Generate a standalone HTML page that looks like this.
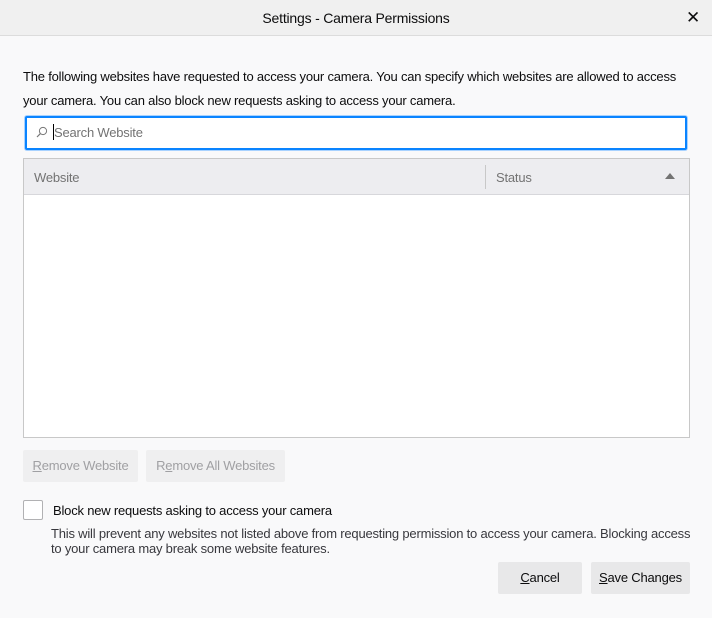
<!DOCTYPE html>
<html><head><style>
*{box-sizing:border-box;margin:0;padding:0}
body{width:712px;height:618px;background:#f9f9fa;font-family:"Liberation Sans",sans-serif;font-size:13px;color:#0c0c0d;position:relative;overflow:hidden;letter-spacing:-0.2px}
.abs{position:absolute}
.title{left:0;top:0;width:712px;height:36px;background:#f0f0f0;border-bottom:1px solid #dcdcdc;text-align:center;line-height:36px;font-size:14px}
.btn{background:#e8e8e9;border-radius:2px;text-align:center;line-height:32px;font-size:13px}
.dis{background:#efeff0;color:#a0a0a3}
</style></head><body>
<div class="abs title">Settings - Camera Permissions</div>
<div class="abs" style="right:12px;top:8px;font-size:17px">✕</div>
<div class="abs" style="left:23px;top:65px;width:660px;line-height:24px">The following websites have requested to access your camera. You can specify which websites are allowed to access your camera. You can also block new requests asking to access your camera.</div>
<div class="abs" style="left:25px;top:116px;width:662px;height:34px;border:2px solid #0a84ff;border-radius:2px;background:#fff;box-shadow:0 0 0 1px #a8d2ff"></div>
<svg class="abs" style="left:36px;top:126px" width="12" height="12" viewBox="0 0 12 12"><circle cx="7" cy="5" r="3.6" fill="none" stroke="#777" stroke-width="1"/><path d="M4.4 7.6 1 11" stroke="#777" stroke-width="1.2"/></svg>
<div class="abs" style="left:53px;top:124px;width:1px;height:16px;background:#000"></div>
<div class="abs" style="left:54px;top:125px;color:#737373">Search Website</div>
<div class="abs" style="left:23px;top:158px;width:667px;height:280px;border:1px solid #c8c8c8;background:#fff"></div>
<div class="abs" style="left:24px;top:159px;width:665px;height:36px;background:#ededf0;border-bottom:1px solid #d7d7db"></div>
<div class="abs" style="left:485px;top:165px;width:1px;height:24px;background:#c8c8c8"></div>
<div class="abs" style="left:34px;top:170px;color:#737373">Website</div>
<div class="abs" style="left:496px;top:170px;color:#737373">Status</div>
<svg class="abs" style="left:665px;top:173px" width="10" height="6"><path d="M0 6 5 0 10 6z" fill="#737373"/></svg>
<div class="abs btn dis" style="left:23px;top:450px;width:115px"><u>R</u>emove Website</div>
<div class="abs btn dis" style="left:146px;top:450px;width:139px">R<u>e</u>move All Websites</div>
<div class="abs" style="left:23px;top:500px;width:20px;height:20px;border:1px solid #b1b1b3;border-radius:2px;background:#fff"></div>
<div class="abs" style="left:53px;top:503px">Block new requests asking to access your camera</div>
<div class="abs" style="left:51px;top:526px;width:640px;line-height:15px;color:#38383d">This will prevent any websites not listed above from requesting permission to access your camera. Blocking access to your camera may break some website features.</div>
<div class="abs btn" style="left:498px;top:562px;width:84px"><u>C</u>ancel</div>
<div class="abs btn" style="left:591px;top:562px;width:99px"><u>S</u>ave Changes</div>
</body></html>
